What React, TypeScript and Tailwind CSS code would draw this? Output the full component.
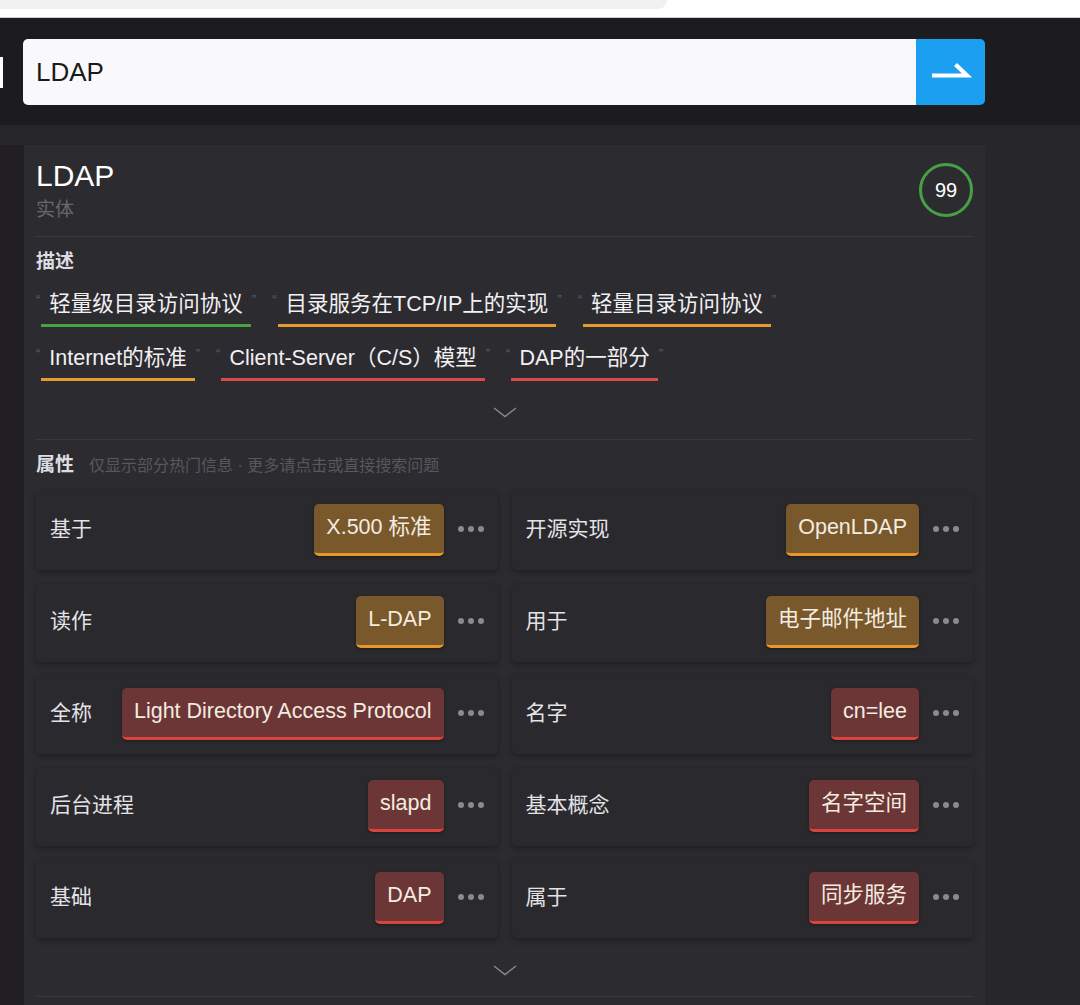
import * as React from "react";

type Tone = "green" | "orange" | "red";

const underline: Record<Tone, string> = {
  green: "border-[#45a345]",
  orange: "border-[#e49a2c]",
  red: "border-[#dc4a45]",
};

const badgeTone: Record<"orange" | "red", string> = {
  orange: "bg-[#79592b] border-[#e8972a]",
  red: "bg-[#6d3636] border-[#d9433e]",
};

const descRows: { text: string; tone: Tone }[][] = [
  [
    { text: "轻量级目录访问协议", tone: "green" },
    { text: "目录服务在TCP/IP上的实现", tone: "orange" },
    { text: "轻量目录访问协议", tone: "orange" },
  ],
  [
    { text: "Internet的标准", tone: "orange" },
    { text: "Client-Server（C/S）模型", tone: "red" },
    { text: "DAP的一部分", tone: "red" },
  ],
];

const attrs: { label: string; value: string; tone: "orange" | "red" }[] = [
  { label: "基于", value: "X.500 标准", tone: "orange" },
  { label: "开源实现", value: "OpenLDAP", tone: "orange" },
  { label: "读作", value: "L-DAP", tone: "orange" },
  { label: "用于", value: "电子邮件地址", tone: "orange" },
  { label: "全称", value: "Light Directory Access Protocol", tone: "red" },
  { label: "名字", value: "cn=lee", tone: "red" },
  { label: "后台进程", value: "slapd", tone: "red" },
  { label: "基本概念", value: "名字空间", tone: "red" },
  { label: "基础", value: "DAP", tone: "red" },
  { label: "属于", value: "同步服务", tone: "red" },
];

const font = "font-['Liberation_Sans','Noto_Sans_CJK_SC',sans-serif]";

function Chevron() {
  return (
    <svg width="24" height="11" viewBox="0 0 24 11" fill="none">
      <polyline points="1,1 12,9.5 23,1" stroke="#8a898e" strokeWidth="1.4" />
    </svg>
  );
}

function Dots() {
  return (
    <div className="flex items-center gap-[4px] ml-[14px]">
      <span className="w-[6px] h-[6px] rounded-full bg-[#8b8a8f]" />
      <span className="w-[6px] h-[6px] rounded-full bg-[#8b8a8f]" />
      <span className="w-[6px] h-[6px] rounded-full bg-[#8b8a8f]" />
    </div>
  );
}

function Tag({ text, tone }: { text: string; tone: Tone }) {
  return (
    <div className="flex items-start">
      <span className="text-[13px] leading-[20px] text-[#5f5e63] mr-[1px]">“</span>
      <span
        className={`px-[8px] pb-[6px] border-b-[3px] text-[21.5px] leading-[28px] text-[#f1f0f3] whitespace-nowrap ${underline[tone]}`}
      >
        {text}
      </span>
      <span className="text-[13px] leading-[20px] text-[#5f5e63] ml-[1px]">”</span>
    </div>
  );
}

function AttrCell({ label, value, tone }: { label: string; value: string; tone: "orange" | "red" }) {
  return (
    <div className="h-[78px] flex items-start pt-[12px] pl-[14px] pr-[14px] rounded-[4px] bg-[#2a292e] shadow-[0_2px_6px_rgba(0,0,0,0.35)]">
      <div className="h-[49px] flex items-center text-[21px] text-[#e3e2e6] whitespace-nowrap mr-[22px]">
        {label}
      </div>
      <div className="flex-1" />
      <div
        className={`h-[52px] flex items-center px-[12px] rounded-[5px] border-b-[3px] text-[21.5px] text-[#f3ece0] whitespace-nowrap shadow-[0_1px_3px_rgba(0,0,0,0.4)] ${badgeTone[tone]}`}
      >
        <span className="-mt-[2px]">{value}</span>
      </div>
      <div className="h-[49px] flex items-center">
        <Dots />
      </div>
    </div>
  );
}

export default function App() {
  return (
    <div className={`w-[1080px] h-[1005px] overflow-hidden bg-[#262529] ${font}`}>
      {/* browser strip */}
      <div className="h-[18px] bg-white border-b border-[#cfcfd2]">
        <div className="w-[667px] h-[9px] bg-[#f1f1f1] rounded-br-[10px]" />
      </div>

      {/* search header */}
      <div className="h-[107px] bg-[#1c1b1f] pt-[21px] flex">
        <div className="w-[3px] h-[31px] bg-white mt-[18px]" />
        <div className="ml-[20px] w-[893px] h-[66px] bg-[#f9f8fb] rounded-l-[5px] flex items-center pl-[13px]">
          <span className="text-[26px] text-[#1a1a1a]">LDAP</span>
        </div>
        <button className="w-[69px] h-[66px] bg-[#1b9ff0] rounded-r-[5px] flex items-center justify-center">
          <svg width="69" height="66" viewBox="0 0 69 66" fill="none">
            <path d="M16 36.5 H51 L39.5 25.5" stroke="white" strokeWidth="4.2" strokeLinejoin="miter" />
          </svg>
        </button>
      </div>

      {/* body */}
      <div className="flex pt-[20px]">
        <div className="w-[24px] bg-[#211f23]" />
        <div className="w-[961px] bg-[#2c2b30] px-3 pt-[12px]">
          {/* title */}
          <div className="flex items-start justify-between">
            <div>
              <div className="text-[30px] leading-[38px] text-white">LDAP</div>
              <div className="mt-[2px] text-[19px] leading-[26px] text-[#69686d]">实体</div>
            </div>
            <div className="mt-[6px] w-[54px] h-[54px] rounded-full border-[3px] border-[#44a244] flex items-center justify-center text-[20px] text-white">
              99
            </div>
          </div>
          <div className="mt-[13px] h-px bg-[#3b3a3f]" />

          {/* description */}
          <div className="mt-[13px] text-[19px] leading-[24px] font-bold text-[#dddce0]">描述</div>
          <div className="mt-[16px] flex flex-col gap-[17px]">
            {descRows.map((row, i) => (
              <div key={i} className="flex gap-[16px]">
                {row.map((t) => (
                  <Tag key={t.text} text={t.text} tone={t.tone} />
                ))}
              </div>
            ))}
          </div>
          <div className="h-[58px] flex items-center justify-center pt-[4px]">
            <Chevron />
          </div>
          <div className="h-px bg-[#38373c]" />

          {/* attributes */}
          <div className="mt-[13px] flex items-baseline gap-[15px]">
            <span className="text-[19px] leading-[24px] font-bold text-[#dddce0]">属性</span>
            <span className="text-[16px] text-[#58575c]">仅显示部分热门信息 · 更多请点击或直接搜索问题</span>
          </div>
          <div className="mt-[14px] grid grid-cols-2 gap-x-[14px] gap-y-[14px]">
            {attrs.map((a) => (
              <AttrCell key={a.label} label={a.label} value={a.value} tone={a.tone} />
            ))}
          </div>
          <div className="h-[58px] flex items-center justify-center pt-[6px]">
            <Chevron />
          </div>
          <div className="h-px bg-[#38373c]" />
          <div className="h-[40px]" />
        </div>
        <div className="flex-1 bg-[#27262a]" />
      </div>
    </div>
  );
}
